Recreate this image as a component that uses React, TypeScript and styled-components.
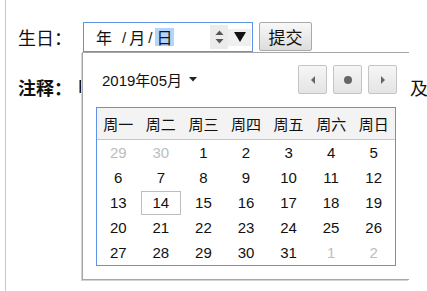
import styled, { createGlobalStyle } from "styled-components";

const GlobalStyle = createGlobalStyle`
  html, body {
    margin: 0;
    padding: 0;
    background: #fff;
    overflow: hidden;
  }
  body {
    font-family: "Liberation Sans", "Noto Sans CJK SC", sans-serif;
    color: #111;
  }
`;

const weekDays = ["周一", "周二", "周三", "周四", "周五", "周六", "周日"];

type Day = { n: number; muted?: boolean; today?: boolean };

const days: Day[] = [
  { n: 29, muted: true },
  { n: 30, muted: true },
  ...Array.from({ length: 31 }, (_, i) => ({ n: i + 1, today: i + 1 === 14 })),
  { n: 1, muted: true },
  { n: 2, muted: true },
];

const App = () => {
  return (
    <>
      <GlobalStyle />
      <Page>
        <FormRow>
          <Label>生日：</Label>
          <DateInput>
            <Segment $gap>年</Segment>
            <Slash>/</Slash>
            <Segment>月</Segment>
            <Slash>/</Slash>
            <Segment $selected>日</Segment>
            <Spin>
              <svg width="9" height="16" viewBox="0 0 9 16">
                <path d="M0.5 6 L4.5 1.5 L8.5 6 Z" fill="#555" />
                <path d="M0.5 10 L4.5 14.5 L8.5 10 Z" fill="#555" />
              </svg>
            </Spin>
            <DropArrow>
              <svg width="12" height="10" viewBox="0 0 12 10">
                <path d="M0 0 L12 0 L6 10 Z" fill="#111" />
              </svg>
            </DropArrow>
          </DateInput>
          <SubmitButton>提交</SubmitButton>
        </FormRow>

        <NoteRow>
          <NoteLabel>注释：</NoteLabel>
          <NoteLead>Firefox</NoteLead>
          <NoteTail>及更早版本不支持 date 类型。</NoteTail>
        </NoteRow>

        <Popup>
          <PickerHead>
            <MonthLabel>
              2019年05月
              <svg width="8" height="5" viewBox="0 0 8 5">
                <path d="M0 0 L8 0 L4 4.5 Z" fill="#222" />
              </svg>
            </MonthLabel>
            <NavGroup>
              <NavButton aria-label="上个月">
                <svg width="6" height="8" viewBox="0 0 6 8">
                  <path d="M5 0 L5 8 L1 4 Z" fill="#666" />
                </svg>
              </NavButton>
              <NavButton aria-label="今天">
                <svg width="10" height="10" viewBox="0 0 10 10">
                  <circle cx="5" cy="5" r="4" fill="#666" />
                </svg>
              </NavButton>
              <NavButton aria-label="下个月">
                <svg width="6" height="8" viewBox="0 0 6 8">
                  <path d="M1 0 L1 8 L5 4 Z" fill="#666" />
                </svg>
              </NavButton>
            </NavGroup>
          </PickerHead>

          <Calendar>
            <WeekHead>
              {weekDays.map((d) => (
                <WeekCell key={d}>{d}</WeekCell>
              ))}
            </WeekHead>
            <DayGrid>
              {days.map((d, i) => (
                <DayCell key={i} $muted={d.muted}>
                  <DayMark $today={d.today}>{d.n}</DayMark>
                </DayCell>
              ))}
            </DayGrid>
          </Calendar>
        </Popup>
      </Page>
    </>
  );
};

const Page = styled.div`
  position: relative;
  margin-left: 5px;
  min-height: 291px;
  box-sizing: border-box;
  border-left: 1px solid #c9c9c9;
  padding: 22px 0 0 12px;
`;

const FormRow = styled.div`
  display: flex;
  align-items: flex-start;
  height: 30px;
`;

const Label = styled.div`
  width: 65px;
  font-size: 18px;
  line-height: 30px;
  font-family: "Noto Sans CJK SC", sans-serif;
`;

const DateInput = styled.div`
  box-sizing: border-box;
  width: 170px;
  height: 30px;
  border: 1px solid #5d93e6;
  display: flex;
  align-items: center;
  padding-left: 12px;
  font-family: "Noto Sans CJK SC", sans-serif;
  font-size: 16px;
`;

const Segment = styled.span<{ $selected?: boolean; $gap?: boolean }>`
  display: inline-block;
  line-height: 18px;
  padding: ${(p) => (p.$selected ? "0 2px 0 1px" : "0")};
  margin-right: ${(p) => (p.$gap ? "7px" : "0")};
  background: ${(p) => (p.$selected ? "#b3d4fc" : "transparent")};
`;

const Slash = styled.span`
  font-family: "Liberation Sans", sans-serif;
  font-size: 15px;
  padding: 0 3px;
`;

const Spin = styled.div`
  margin-left: auto;
  width: 18px;
  height: 24px;
  background: #ebebeb;
  display: flex;
  align-items: center;
  justify-content: center;
`;

const DropArrow = styled.div`
  width: 23px;
  height: 17px;
  margin-right: 1px;
  background: #efefef;
  display: flex;
  align-items: center;
  justify-content: center;
`;

const SubmitButton = styled.button`
  margin-left: 6px;
  box-sizing: border-box;
  width: 53px;
  height: 29px;
  padding: 0;
  border: 1px solid #a9a9a9;
  border-radius: 2px;
  background: linear-gradient(#f8f8f8, #dddddd);
  font-family: "Noto Sans CJK SC", sans-serif;
  font-size: 17px;
  line-height: 27px;
  color: #111;
`;

const NoteRow = styled.div`
  margin-top: 26px;
  display: flex;
  white-space: nowrap;
  font-family: "Noto Sans CJK SC", sans-serif;
  font-size: 18px;
  line-height: 18px;
  & > * {
    flex-shrink: 0;
  }
`;

const NoteLabel = styled.span`
  width: 60px;
  font-weight: bold;
`;

const NoteLead = styled.span`
  width: 5px;
  overflow: hidden;
  font-family: "Liberation Sans", sans-serif;
`;

const NoteTail = styled.span`
  margin-left: 327px;
`;

const Popup = styled.div`
  position: absolute;
  left: 76px;
  top: 52px;
  box-sizing: border-box;
  width: 327px;
  height: 228px;
  background: #fff;
  border: 1px solid #a6a6a6;
  border-right: none;
  box-shadow: -1px 1px 0 #d2d2d2;
  padding: 12px 12px 0 13px;
`;

const PickerHead = styled.div`
  display: flex;
  align-items: center;
  justify-content: space-between;
  height: 29px;
`;

const MonthLabel = styled.div`
  display: flex;
  align-items: center;
  gap: 7px;
  padding-left: 6px;
  font-size: 15px;
  color: #111;
`;

const NavGroup = styled.div`
  display: flex;
  gap: 6px;
`;

const NavButton = styled.button`
  box-sizing: border-box;
  width: 29px;
  height: 29px;
  padding: 0;
  border: 1px solid #c4c4c4;
  border-radius: 2px;
  background: linear-gradient(#f6f6f6, #e4e4e4);
  display: flex;
  align-items: center;
  justify-content: center;
`;

const Calendar = styled.div`
  margin-top: 13px;
  box-sizing: border-box;
  width: 300px;
  border: 1px solid #5d93e6;
`;

const WeekHead = styled.div`
  display: grid;
  grid-template-columns: repeat(7, 1fr);
  height: 31px;
  background: #f3f3f3;
  border-bottom: 1px solid #c6c6c6;
`;

const WeekCell = styled.div`
  display: flex;
  align-items: center;
  justify-content: center;
  font-family: "Noto Sans CJK SC", sans-serif;
  font-size: 15px;
  color: #111;
`;

const DayGrid = styled.div`
  display: grid;
  grid-template-columns: repeat(7, 1fr);
  grid-auto-rows: 25px;
`;

const DayCell = styled.div<{ $muted?: boolean }>`
  display: flex;
  align-items: center;
  justify-content: center;
  font-size: 15px;
  color: ${(p) => (p.$muted ? "#bdbdbd" : "#111")};
`;

const DayMark = styled.span<{ $today?: boolean }>`
  box-sizing: border-box;
  width: 40px;
  height: 24px;
  display: flex;
  align-items: center;
  justify-content: center;
  border: 1px solid ${(p) => (p.$today ? "#bdbdbd" : "transparent")};
`;

export default App;
